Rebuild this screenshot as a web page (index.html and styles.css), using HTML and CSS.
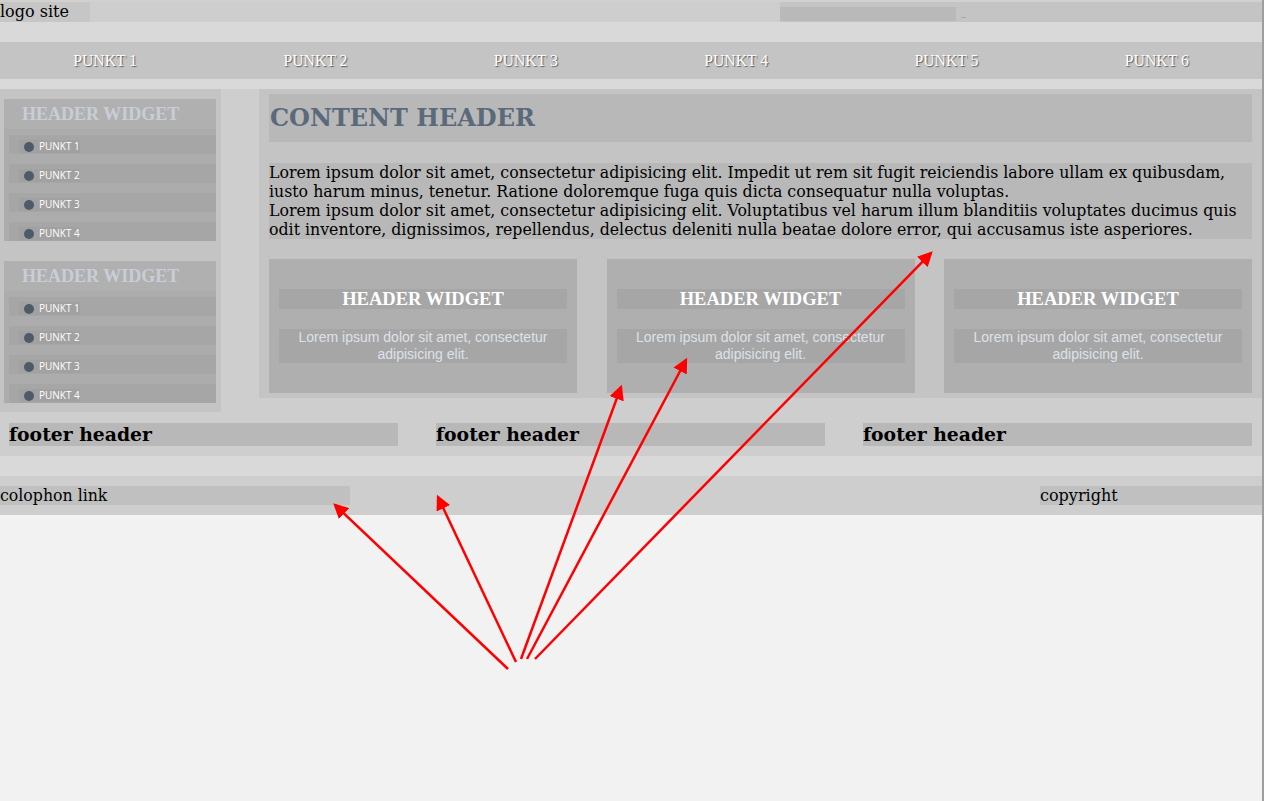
FILE: index.html
```html
<!DOCTYPE html>
<html lang="de">
<head>
<meta charset="utf-8">
<title>Layout</title>
<link rel="stylesheet" href="styles.css">
</head>
<body>
<div class="page">
  <header class="topbar">
    <div class="logo">logo site</div>
    <div class="top-fill"></div>
    <div class="search"><span class="search-box"></span><span class="search-btn"></span></div>
  </header>
  <div class="band"></div>
  <nav class="nav">
    <a href="#">PUNKT 1</a>
    <a href="#">PUNKT 2</a>
    <a href="#">PUNKT 3</a>
    <a href="#">PUNKT 4</a>
    <a href="#">PUNKT 5</a>
    <a href="#">PUNKT 6</a>
  </nav>
  <div class="band band-small"></div>
  <div class="main">
    <div class="body-row">
      <aside class="sidebar">
        <section class="side-widget">
          <h3>HEADER WIDGET</h3>
          <ul>
            <li><span>PUNKT 1</span></li>
            <li><span>PUNKT 2</span></li>
            <li><span>PUNKT 3</span></li>
            <li><span>PUNKT 4</span></li>
          </ul>
        </section>
        <section class="side-widget">
          <h3>HEADER WIDGET</h3>
          <ul>
            <li><span>PUNKT 1</span></li>
            <li><span>PUNKT 2</span></li>
            <li><span>PUNKT 3</span></li>
            <li><span>PUNKT 4</span></li>
          </ul>
        </section>
      </aside>
      <main class="content">
        <h1>CONTENT HEADER</h1>
        <div class="text">Lorem ipsum dolor sit amet, consectetur adipisicing elit. Impedit ut rem sit fugit reiciendis labore ullam ex quibusdam, iusto harum minus, tenetur. Ratione doloremque fuga quis dicta consequatur nulla voluptas.<br>Lorem ipsum dolor sit amet, consectetur adipisicing elit. Voluptatibus vel harum illum blanditiis voluptates ducimus quis odit inventore, dignissimos, repellendus, delectus deleniti nulla beatae dolore error, qui accusamus iste asperiores.</div>
        <div class="widgets">
          <div class="widget">
            <h4>HEADER WIDGET</h4>
            <p>Lorem ipsum dolor sit amet, consectetur adipisicing elit.</p>
          </div>
          <div class="widget">
            <h4>HEADER WIDGET</h4>
            <p>Lorem ipsum dolor sit amet, consectetur adipisicing elit.</p>
          </div>
          <div class="widget">
            <h4>HEADER WIDGET</h4>
            <p>Lorem ipsum dolor sit amet, consectetur adipisicing elit.</p>
          </div>
        </div>
      </main>
    </div>
    <footer class="footer-cols">
      <h4>footer header</h4>
      <h4>footer header</h4>
      <h4>footer header</h4>
    </footer>
  </div>
  <div class="band"></div>
  <div class="bottom">
    <div class="colophon">colophon link</div>
    <div class="copyright">copyright</div>
  </div>
  <svg class="arrows" width="1264" height="801" viewBox="0 0 1264 801">
    <defs>
      <marker id="head" markerWidth="6" markerHeight="6" refX="5" refY="3" orient="auto" markerUnits="strokeWidth">
        <path d="M0,0 L6,3 L0,6 Z" fill="#ff0000"/>
      </marker>
    </defs>
    <g stroke="#ff0000" stroke-width="2.5" fill="none" marker-end="url(#head)">
      <line x1="508" y1="669" x2="335" y2="505"/>
      <line x1="516" y1="662" x2="438" y2="497"/>
      <line x1="521" y1="659" x2="621" y2="387"/>
      <line x1="527" y1="659" x2="686" y2="360"/>
      <line x1="535" y1="659" x2="931" y2="253"/>
    </g>
  </svg>
</div>
</body>
</html>
```
FILE: styles.css
```css
html { background: #f2f2f2; }
body {
  margin: 0;
  background: #f2f2f2;
}
.page {
  position: relative;
  width: 1262px;
  min-height: 801px;
  border-right: 2px solid #9e9e9e;
  font-family: "DejaVu Serif", serif;
  font-size: 16px;
  color: #000;
}
.topbar {
  display: flex;
  height: 20px;
  border-top: 2px solid #d4d0cc;
  background: #cecece;
}
.logo {
  width: 90px;
  background: #c6c6c6;
  line-height: 20px;
  font-size: 16px;
}
.top-fill { flex: 1; }
.search {
  width: 482px;
  background: #c4c4c4;
  display: flex;
  align-items: flex-start;
}
.search-box {
  margin-top: 5px;
  width: 176px;
  height: 14px;
  background: #b9b9b9;
}
.search-btn {
  margin: 15px 0 0 5px;
  width: 5px;
  height: 1px;
  background: #a8a8a8;
}
.band { height: 20px; background: #d9d9d9; }
.band-small { height: 10px; }
.nav {
  display: flex;
  height: 37px;
  background: #c4c4c4;
}
.nav a {
  flex: 1;
  text-align: center;
  line-height: 37px;
  font-family: "Liberation Serif", serif;
  font-size: 15.75px;
  color: #fff;
  text-decoration: none;
  text-shadow: 1px 1px 1px #5a5a5a;
}
.main { background: #cecece; }
.body-row {
  display: flex;
  align-items: flex-start;
  gap: 38px;
}
.sidebar {
  width: 212px;
  padding: 10px 5px 9px 4px;
  background: #c4c4c4;
  display: flex;
  flex-direction: column;
  gap: 20px;
}
.side-widget { background: #acacac; }
.side-widget h3 {
  margin: 0;
  height: 30px;
  line-height: 31px;
  padding-left: 18px;
  background: #b0b0b0;
  font-family: "Liberation Serif", serif;
  font-size: 18px;
  font-weight: bold;
  color: #c8ced6;
}
.side-widget ul {
  list-style: none;
  margin: 6px 0 0;
  padding: 0 0 0 5px;
  display: flex;
  flex-direction: column;
  gap: 10px;
}
.side-widget li {
  display: flex;
  align-items: flex-start;
  height: 19px;
  padding: 5px 0 0 10px;
  box-sizing: border-box;
  background: #a6a6a6;
}
.side-widget li span {
  display: flex;
  align-items: center;
  height: 13px;
  line-height: 13px;
  padding-left: 5px;
  gap: 5px;
  background: #a1a1a1;
  font-family: "Open Sans", sans-serif;
  font-size: 10px;
  color: #fff;
}
.side-widget li span::before {
  content: "";
  width: 10px;
  height: 10px;
  border-radius: 50%;
  background: #4e5a68;
}
.content {
  flex: 1;
  padding: 5px 10px;
  background: #c4c4c4;
}
.content h1 {
  margin: 0;
  height: 48px;
  line-height: 48px;
  padding-left: 1px;
  background: #b8b8b8;
  font-family: "DejaVu Serif", serif;
  font-size: 24px;
  font-weight: bold;
  color: #5a6a7a;
}
.text {
  margin-top: 21px;
  background: #b8b8b8;
  line-height: 19px;
  font-size: 15.78px;
}
.widgets {
  margin-top: 20px;
  display: grid;
  grid-template-columns: repeat(3, 1fr);
  gap: 29.5px;
}
.widget {
  padding: 30px 10px;
  background: #afafaf;
}
.widget h4 {
  margin: 0;
  height: 20px;
  line-height: 20px;
  background: #a6a6a6;
  text-align: center;
  font-family: "Liberation Serif", serif;
  font-size: 18.5px;
  font-weight: bold;
  color: #fff;
}
.widget p {
  margin: 20px 0 0;
  background: #a6a6a6;
  text-align: center;
  font-family: "Liberation Sans", sans-serif;
  font-size: 14px;
  line-height: 17px;
  color: #dde2e8;
}
.footer-cols {
  display: grid;
  grid-template-columns: repeat(3, 1fr);
  gap: 38px;
  padding: 11px 10px 10px 9px;
}
.footer-cols h4 {
  margin: 0;
  height: 23px;
  line-height: 23px;
  background: #b8b8b8;
  font-family: "DejaVu Serif", serif;
  font-size: 18.8px;
  font-weight: bold;
}
.bottom {
  display: flex;
  justify-content: space-between;
  padding: 10px 0;
  background: #cecece;
}
.colophon, .copyright {
  height: 19px;
  line-height: 19px;
  background: #c0c0c0;
  font-size: 16px;
}
.colophon {
  width: 350px;
  font-family: "DejaVu Serif Condensed", "DejaVu Serif", serif;
  font-size: 17.5px;
}
.copyright {
  width: 222px;
  font-family: "DejaVu Serif", serif;
}
.arrows {
  position: absolute;
  left: 0;
  top: 0;
  pointer-events: none;
}
```
